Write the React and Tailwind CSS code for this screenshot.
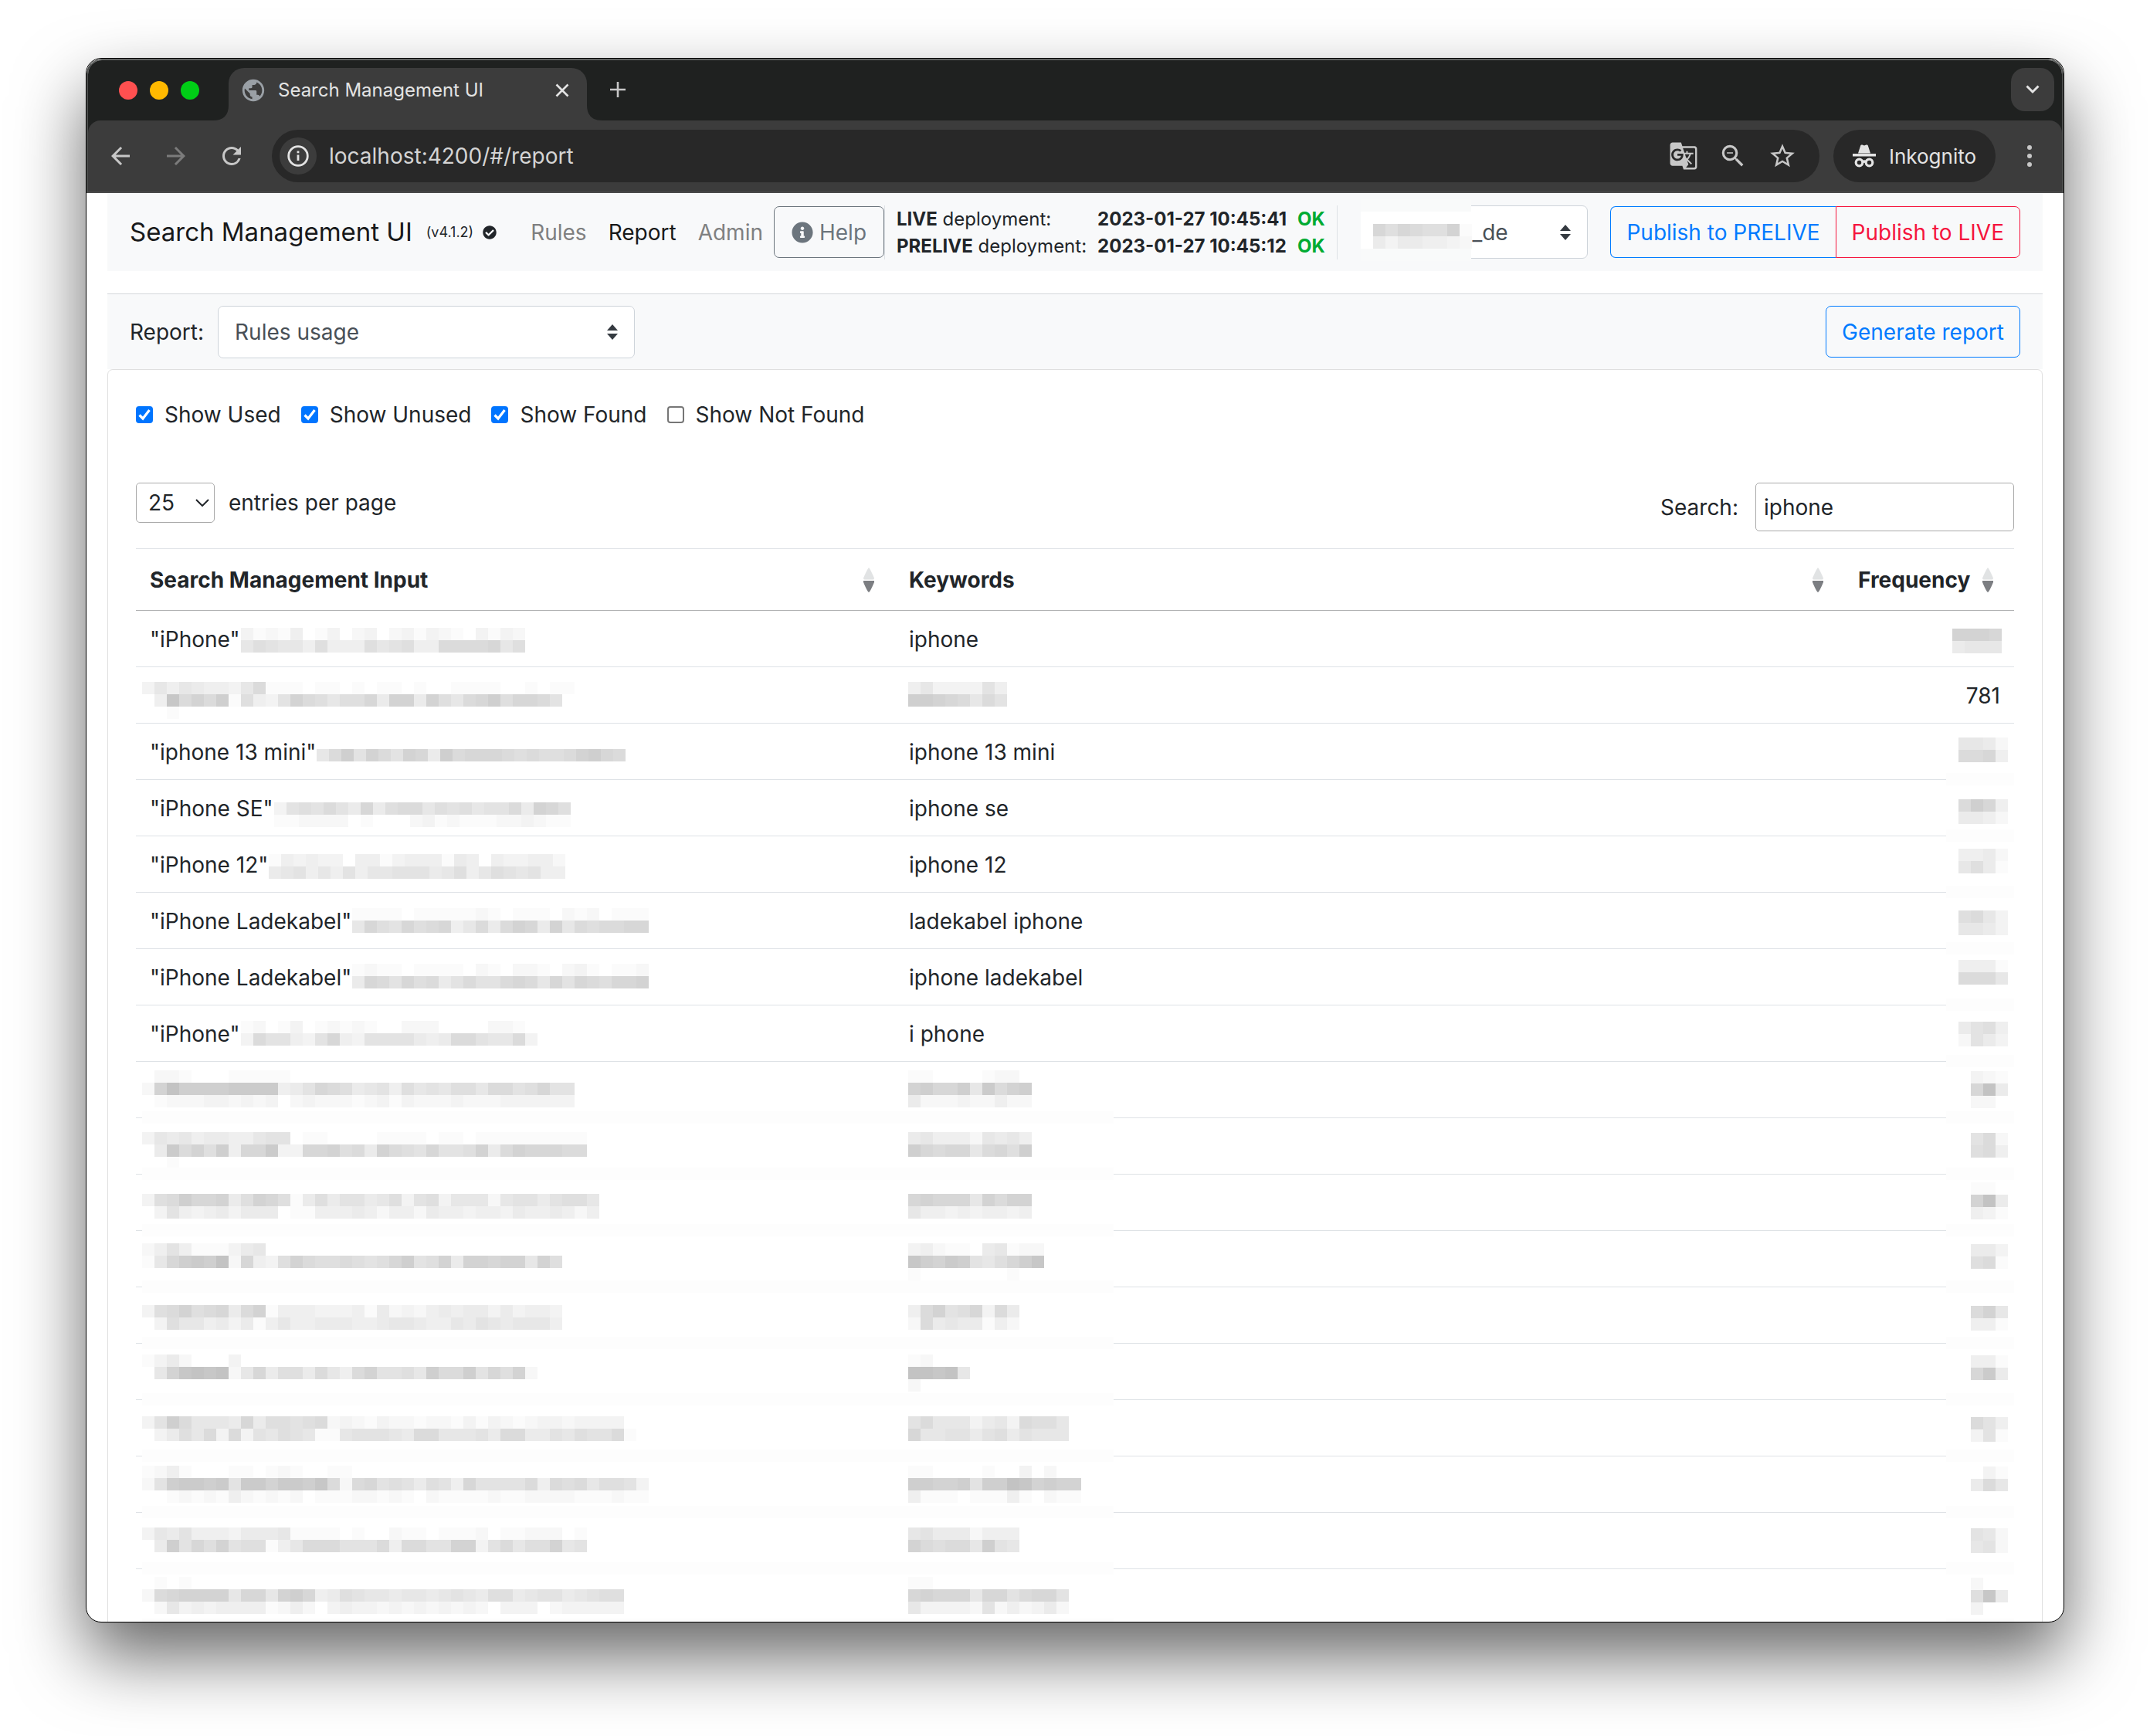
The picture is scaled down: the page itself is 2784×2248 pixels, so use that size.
import React from 'react';
import { MdArrowBack, MdArrowForward, MdGTranslate, MdPublic, MdRefresh, MdStarBorder, MdZoomOut } from 'react-icons/md';
import { FaCheckCircle, FaInfoCircle } from 'react-icons/fa';

const CELL = 16;

// Each digit of a line is one cell's darkness, 0 (white) to f.
const rows = [
  {
    input: '"iPhone"',
    inputMask: { y: 22, lines: ['31214013023023132103132', '68766484448678449999a68'] },
    keyword: 'iphone',
    freqMask: { y: 23, lines: ['bbba', '5666'] },
    freqPad: 'pr-4',
  },
  {
    inputMask: { y: 19, lines: ['36465443691110110101101001111001011', '04e9b9c18437b98688a5bb5b869ac8aa97', '001'] },
    keywordMask: { y: 19, lines: ['46333374', 'ccba9697'] },
    freq: '781',
  },
  {
    input: '"iphone 13 mini"',
    inputMask: { y: 33, lines: ['69c7b97ba5c9aaa989889bca9'] },
    keyword: 'iphone 13 mini',
    freqMask: { y: 18, lines: ['6652', '99a4'] },
  },
  {
    input: '"iPhone SE"',
    inputMask: { y: 29, lines: ['3787975a5899687867795ba8', '112222010002312111223211'] },
    keyword: 'iphone se',
    freqMask: { y: 25, lines: ['9ca4', '5542'] },
  },
  {
    input: '"iPhone 12"',
    inputMask: { y: 23, lines: ['143433044134441540433442', '567464746677756846876744'] },
    keyword: 'iphone 12',
    freqMask: { y: 16, lines: ['4452', '6851'] },
  },
  {
    input: '"iPhone Ladekabel"',
    inputMask: { y: 20, lines: ['111101111121011102120111', '6a87a89a46959ba5b69899aa'] },
    keyword: 'ladekabel iphone',
    freqMask: { y: 23, lines: ['8963', '6653'] },
  },
  {
    input: '"iPhone Ladekabel"',
    inputMask: { y: 19, lines: ['121101111021022102310112', '5a97a89579779a96a7a98aab'] },
    keyword: 'iphone ladekabel',
    freqMask: { y: 14, lines: ['4441', '9996'] },
  },
  {
    input: '"iPhone"',
    inputMask: { y: 20, lines: ['120130121210022200002210', '3977437a4377775459976693'] },
    keyword: 'i phone',
    freqMask: { y: 21, lines: ['5784', '2753'] },
  },
  {
    inputMask: { y: 11, lines: ['022100011111', '2bfccccdddd457a98567486768869978a77', '01222332323023222123132223222333333'] },
    keywordMask: { y: 11, lines: ['1100001220', 'bcaac6d9bc', '5222322422'] },
    freqMask: { y: 12, lines: ['321', 'af5', '220'] },
  },
  {
    inputMask: { y: 18, lines: ['365645544677011000011110110111111111', '05d9b8c4aad33aab895b987a778b59baaa99', '001'] },
    keywordMask: { y: 18, lines: ['5644426564', 'ca9aa69a8c'] },
    freqMask: { y: 19, lines: ['792', '894'] },
  },
  {
    inputMask: { y: 25, lines: ['389caab58ba81585775683783666267757886', '0374345355501144454244254434435445424'] },
    keywordMask: { y: 25, lines: ['abaaa6b9bb', '6443434434'] },
    freqMask: { y: 10, lines: ['110', 'bf5', '431'] },
  },
  {
    inputMask: { y: 16, lines: ['2474111356', '16acdcf2a438b9889878ac78b5bbabb6b8'] },
    keywordMask: { y: 16, lines: ['34211056122', 'ecbdc768ace', '10000000100'] },
    freqMask: { y: 17, lines: ['553', '891'] },
  },
  {
    inputMask: { y: 23, lines: ['389b89a59b144433341523245455353443', '0386645351464455544566544657656664'] },
    keywordMask: { y: 23, lines: ['49b78a395', '295655142'] },
    freqMask: { y: 24, lines: ['9b6', '441'] },
  },
  {
    inputMask: { y: 14, lines: ['13520003', '06befef26a58859649b7786c99c7a8b2'] },
    keywordMask: { y: 14, lines: ['12', 'ffef6', '2'] },
    freqMask: { y: 15, lines: ['441', 'ad5'] },
  },
  {
    inputMask: { y: 21, lines: ['37c96665a588789232132212213132123323333', '0358693937687611677765996667599557687791'] },
    keywordMask: { y: 21, lines: ['7966635639886', 'a667757857666'] },
    freqMask: { y: 22, lines: ['974', '371'] },
  },
  {
    inputMask: { y: 12, lines: ['12410001101210011', '27cddcd7ddbddce929a7875874a77779498968873', '00121214212120111221210211112112222111211'] },
    keywordMask: { y: 12, lines: ['11000010030200', 'ccbbc7ccfebcbb', '41110111410211'] },
    freqMask: { y: 13, lines: ['031', '596'] },
  },
  {
    inputMask: { y: 19, lines: ['365744435556111101002110111201122201', '05c7a8b788146999777949977bb379688b67'] },
    keywordMask: { y: 19, lines: ['675552444', 'b98996c76'] },
    freqMask: { y: 20, lines: ['762', '672'] },
  },
  {
    inputMask: { y: 10, lines: ['01010', '29abbbb6aa6bca4587665665676588567756788', '026343444412420343323232323203330233333'] },
    keywordMask: { y: 10, lines: ['11', 'abaaa6aa79aa7', '6333327242352'] },
    freqMask: { y: 11, lines: ['200', '8e5', '300'] },
  },
];

const FIRST_MASKED_ROW = 8;

const Mosaic = ({ mask, className = 'h-[72px]' }) => {
  const cols = Math.max(...mask.lines.map((line) => line.length));
  return (
    <svg className={`${className} shrink-0`} width={cols * CELL} shapeRendering="crispEdges" aria-hidden="true">
      {mask.lines.map((line, row) =>
        [...line].map((digit, col) => {
          const shade = 255 - parseInt(digit, 16) * 4;
          return (
            <rect
              key={`${row}-${col}`}
              x={col * CELL}
              y={mask.y + row * CELL}
              width={CELL}
              height={CELL}
              fill={`rgb(${shade},${shade},${shade})`}
            />
          );
        })
      )}
    </svg>
  );
};

const UpDownIcon = () => (
  <svg viewBox="0 0 14 20" className="pointer-events-none absolute right-[22px] top-1/2 h-5 w-[14px] -translate-y-1/2" fill="#343a40">
    <path d="M7 0l7 8H0zM7 20l7-8H0z" />
  </svg>
);

const SortIcon = () => (
  <svg viewBox="0 0 14 32" className="h-8 w-[14px] shrink-0">
    <path d="M7 0Q8.500 1 14 13.500q0 2-1.500 2h-11q-1.500 0-1.500-2Q5.500 1 7 0z" fill="#e1e3e4" />
    <path d="M0 17h14v2Q9 31 7 32 5 31 0 19z" fill="#7c7e82" />
  </svg>
);

const IncognitoIcon = () => (
  <svg viewBox="0 0 30 30" className="h-[30px] w-[30px]" fill="#e3e3e3">
    <path d="M7 11.500L10.200 1.600Q10.800 0 12.400.600L15 1.600 17.600.600Q19.200 0 19.800 1.600L23 11.500z" />
    <rect y="12" width="30" height="3.500" />
    <g fill="none" stroke="#e3e3e3" strokeWidth="3.200">
      <circle cx="8.500" cy="23.500" r="4.300" />
      <circle cx="21.500" cy="23.500" r="4.300" />
      <path d="M12.500 23q2.500-2 5 0" />
    </g>
  </svg>
);

const TabStrip = () => (
  <div className="flex h-[78px] items-start bg-[#1f2120] pl-10 pr-[10px]">
    <div className="mt-[27px] flex gap-4">
      <span className="h-6 w-6 rounded-full bg-[#ff5050]" />
      <span className="h-6 w-6 rounded-full bg-[#ffb900]" />
      <span className="h-6 w-6 rounded-full bg-[#00ce16]" />
    </div>
    <div className="relative ml-[38px] mt-[10px] flex h-[68px] w-[464px] items-center rounded-t-[20px] bg-[#3c3c3c] pb-[10px] pl-[15px] pr-[22px]">
      <svg viewBox="0 0 20 20" className="absolute -left-5 bottom-0 h-5 w-5" fill="#3c3c3c">
        <path d="M20 0v20H0Q20 20 20 0z" />
      </svg>
      <svg viewBox="0 0 20 20" className="absolute -right-5 bottom-0 h-5 w-5" fill="#3c3c3c">
        <path d="M0 0v20h20Q0 20 0 0z" />
      </svg>
      <MdPublic className="h-[34px] w-[34px] text-[#9aa0a6]" />
      <span className="ml-[15px] whitespace-nowrap text-2xl text-[#e3e3e3]">Search Management UI</span>
      <button aria-label="Close tab" className="ml-auto">
        <svg viewBox="0 0 20 20" className="h-5 w-5" stroke="#e3e3e3" strokeWidth="2.600">
          <path d="M2.500 2.500l15 15M17.500 2.500l-15 15" />
        </svg>
      </button>
    </div>
    <button aria-label="New tab" className="ml-[30px] mt-[28px]">
      <svg viewBox="0 0 20 20" className="h-5 w-5" stroke="#c7c7c7" strokeWidth="2.600">
        <path d="M10 0v20M0 10h20" />
      </svg>
    </button>
    <button aria-label="Search tabs" className="ml-auto mt-[10px] flex h-14 w-14 items-center justify-center rounded-[18px] bg-[#3c3c3c]">
      <svg viewBox="0 0 18 12" className="h-3 w-[18px]" fill="none" stroke="#e3e3e3" strokeWidth="3">
        <path d="M1.500 1.500L9 9l7.500-7.500" />
      </svg>
    </button>
  </div>
);

const Toolbar = () => (
  <div className="bg-[#1f2120]">
    <div className="flex h-[94px] items-center rounded-t-[16px] border-b-2 border-[#4a4a4a] bg-[#3c3c3c] px-6 text-[#c7c7c7]">
      <div className="flex gap-9">
        <button aria-label="Back"><MdArrowBack className="h-9 w-9" /></button>
        <button aria-label="Forward" className="text-[#7b7b7b]"><MdArrowForward className="h-9 w-9" /></button>
        <button aria-label="Reload"><MdRefresh className="h-9 w-9" /></button>
      </div>
      <div className="ml-[34px] flex h-[68px] flex-1 items-center rounded-full bg-[#282828] pl-[10px] pr-[29px]">
        <button aria-label="Site information" className="flex h-12 w-12 items-center justify-center rounded-full bg-[#3c3c3c]">
          <svg viewBox="0 0 28 28" className="h-7 w-7" fill="none" stroke="#e3e3e3" strokeWidth="2.800">
            <circle cx="14" cy="14" r="12.300" />
            <path d="M14 12.500v7.500M14 7.500v2.800" />
          </svg>
        </button>
        <input aria-label="Address" className="ml-4 min-w-0 flex-1 text-[28px] text-[#d4d4d4] outline-none" defaultValue="localhost:4200/#/report" />
        <div className="flex items-center gap-[26px]">
          <button aria-label="Translate"><MdGTranslate className="h-[38px] w-[38px]" /></button>
          <button aria-label="Zoom"><MdZoomOut className="h-[38px] w-[38px]" /></button>
          <button aria-label="Bookmark"><MdStarBorder className="h-[38px] w-[38px]" /></button>
        </div>
      </div>
      <button className="ml-[18px] flex h-[68px] w-[210px] items-center rounded-full bg-[#282828] pl-[25px] text-[#e3e3e3]">
        <IncognitoIcon />
        <span className="ml-[17px] text-[26px]">Inkognito</span>
      </button>
      <button aria-label="Menu" className="ml-[26px] flex w-9 flex-col items-center gap-[5px]">
        <span className="h-[6px] w-[6px] rounded-full bg-[#c7c7c7]" />
        <span className="h-[6px] w-[6px] rounded-full bg-[#c7c7c7]" />
        <span className="h-[6px] w-[6px] rounded-full bg-[#c7c7c7]" />
      </button>
    </div>
  </div>
);

const Deployment = ({ name, time }) => (
  <>
    <dt><b>{name}</b> deployment:</dt>
    <dd className="font-bold">{time}</dd>
    <dd className="font-bold text-[#00ab32]">OK</dd>
  </>
);

const Navbar = () => (
  <nav className="flex h-[101px] items-center whitespace-nowrap bg-[#f8f9fa] px-[29px]">
    <a href="#/" className="text-[33px] text-[#18191a]">Search Management UI</a>
    <span className="ml-[18px] text-lg">(v4.1.2)</span>
    <FaCheckCircle className="ml-3 h-[18px] w-[18px] shrink-0" />
    <div className="ml-[44px] flex gap-[28px] text-[#7f8081]">
      <a href="#/rules">Rules</a>
      <a href="#/report" className="text-[#18191a]">Report</a>
      <a href="#/admin">Admin</a>
    </div>
    <button className="ml-[14px] flex h-[67px] items-center rounded-[7px] border border-[#6c757d] px-[22px] text-[#6c757d]">
      <FaInfoCircle className="h-7 w-7" />
      <span className="ml-2">Help</span>
    </button>
    <dl className="grid grid-cols-[auto_auto_auto] gap-x-[14px] border-x border-[#dee2e6] px-[15px] text-2xl leading-[35px]">
      <Deployment name="LIVE" time="2023-01-27 10:45:41" />
      <Deployment name="PRELIVE" time="2023-01-27 10:45:12" />
    </dl>
    <div className="relative ml-auto w-[294px]">
      <select aria-label="Index" className="h-[69px] w-full appearance-none rounded-[7px] border border-[#ced4da] bg-white pl-[143px] text-[#495057]">
        <option>_de</option>
      </select>
      <UpDownIcon />
      <div className="absolute -top-2 left-0 flex h-20 w-[143px] flex-col border-y-[16px] border-[#f9fafa] bg-white pl-4">
        <Mosaic mask={{ y: 16, lines: ['a8a988b1', '53554432'] }} className="h-12" />
      </div>
    </div>
    <div className="ml-[29px] flex">
      <button className="h-[67px] rounded-l-[7px] border border-r-0 border-[#007bff] px-5 text-[#007bff]">Publish to PRELIVE</button>
      <button className="h-[67px] rounded-r-[7px] border border-[#f5153e] px-5 text-[#f5153e]">Publish to LIVE</button>
    </div>
  </nav>
);

const ReportBar = () => (
  <div className="mt-[29px] flex h-[98px] items-center border-t border-[#d5d8db] bg-[#f8f9fa] px-[29px]">
    <label htmlFor="report">Report:</label>
    <div className="relative ml-[18px] w-[540px]">
      <select id="report" className="h-[68px] w-full appearance-none rounded-[7px] border border-[#ced4da] bg-white px-[21px] text-[#495057]">
        <option>Rules usage</option>
      </select>
      <UpDownIcon />
    </div>
    <button className="ml-auto h-[67px] rounded-[7px] border border-[#007bff] px-5 text-[#007bff]">Generate report</button>
  </div>
);

const filters = [
  { label: 'Show Used', checked: true },
  { label: 'Show Unused', checked: true },
  { label: 'Show Found', checked: true },
  { label: 'Show Not Found', checked: false },
];

const Filters = () => (
  <div className="flex h-9 items-center gap-[26px]">
    {filters.map(({ label, checked }) => (
      <label key={label} className="flex items-center gap-[15px]">
        <span className="relative flex">
          <input
            type="checkbox"
            defaultChecked={checked}
            className="peer h-[22px] w-[22px] appearance-none rounded-[4px] border-2 border-[#767676] bg-white checked:border-[#0075ff] checked:bg-[#0075ff]"
          />
          <svg viewBox="0 0 22 22" className="pointer-events-none absolute inset-0 hidden peer-checked:block" fill="none" stroke="#fff" strokeWidth="3.200">
            <path d="M4.500 11.500l4.500 4.500 8.500-11" />
          </svg>
        </span>
        {label}
      </label>
    ))}
  </div>
);

const TableControls = () => (
  <div className="mt-[70px] flex h-[63px] items-start justify-between">
    <label className="flex items-center gap-[18px]">
      <span className="relative">
        <select className="h-[52px] w-[102px] appearance-none rounded-[5px] border border-[#aaa] bg-white pl-[15px]">
          <option>25</option>
        </select>
        <svg viewBox="0 0 18 10" className="pointer-events-none absolute right-[7px] top-1/2 h-[10px] w-[18px] -translate-y-1/2" fill="none" stroke="#212529" strokeWidth="2">
          <path d="M1 1l8 8 8-8" />
        </svg>
      </span>
      entries per page
    </label>
    <label className="flex items-center gap-[22px]">
      Search:
      <input className="h-[63px] w-[335px] rounded-[5px] border border-[#aaa] px-[10px] outline-none" defaultValue="iphone" />
    </label>
  </div>
);

const HeaderCell = ({ children, className }) => (
  <th className={`h-[81px] border-b border-t border-b-[#b1b2b3] border-t-[#dee2e6] p-0 text-left font-bold ${className}`}>
    <button className="flex w-full items-center justify-between">
      {children}
      <SortIcon />
    </button>
  </th>
);

const ReportRow = ({ row, index }) => {
  const masked = index >= FIRST_MASKED_ROW;
  return (
    <tr className="h-[73px] leading-[74px]">
      <td className={`relative border-b border-[#dee2e6] p-0 ${row.input ? 'pl-[18px]' : 'pl-2'}`}>
        <div className="flex h-[72px] gap-px overflow-hidden whitespace-nowrap">
          {row.input}
          <Mosaic mask={row.inputMask} />
        </div>
        {masked && <div className="absolute -bottom-2 left-2 right-0 h-4 bg-[#fdfdfd]" />}
      </td>
      <td className={`relative border-b border-[#dee2e6] p-0 ${row.keyword ? 'pl-[18px]' : 'pl-[17px]'}`}>
        <div className="flex h-[72px] overflow-hidden">
          {row.keyword || <Mosaic mask={row.keywordMask} />}
        </div>
        {masked && <div className="absolute -bottom-2 left-0 h-4 w-[283px] bg-[#fdfdfd]" />}
      </td>
      <td className={`relative border-b border-[#dee2e6] p-0 ${row.freq ? 'pr-[18px]' : row.freqPad || 'pr-2'}`}>
        <div className="flex h-[72px] justify-end overflow-hidden">
          {row.freq || <Mosaic mask={row.freqMask} />}
        </div>
        {index > 1 && <div className="absolute -bottom-2 right-0 h-4 w-[88px] bg-[#fdfdfd]" />}
      </td>
    </tr>
  );
};

const ReportTable = () => (
  <table className="mt-[22px] w-full table-fixed border-separate border-spacing-0">
    <thead>
      <tr>
        <HeaderCell className="w-[983px] pl-[18px] pr-[27px]">Search Management Input</HeaderCell>
        <HeaderCell className="pl-[18px] pr-[27px]">Keywords</HeaderCell>
        <HeaderCell className="w-[220px] pl-[18px] pr-[27px]">Frequency</HeaderCell>
      </tr>
    </thead>
    <tbody>
      {rows.map((row, index) => (
        <ReportRow key={index} row={row} index={index} />
      ))}
    </tbody>
  </table>
);

const App = () => {
  return (
    <div className="flex h-screen flex-col overflow-hidden bg-white px-[111px] pb-[147px] pt-[75px] font-['Inter','Liberation_Sans',sans-serif] text-[28px] text-[#212529]">
      <div className="flex min-h-0 flex-1 flex-col overflow-hidden rounded-[20px] border border-black bg-white shadow-[0_44px_90px_rgba(0,0,0,0.6)]">
        <header className="shrink-0 overflow-hidden rounded-t-[20px] border-x-2 border-t-2 border-x-[#4c4e4d] border-t-[#636564]">
          <TabStrip />
          <Toolbar />
        </header>
        <main className="min-h-0 flex-1 overflow-hidden px-[27px]">
          <Navbar />
          <ReportBar />
          <div className="rounded-t-[7px] border border-[#dfdfdf] px-9 pt-10">
            <Filters />
            <TableControls />
            <ReportTable />
          </div>
        </main>
      </div>
    </div>
  );
};

export default App;
